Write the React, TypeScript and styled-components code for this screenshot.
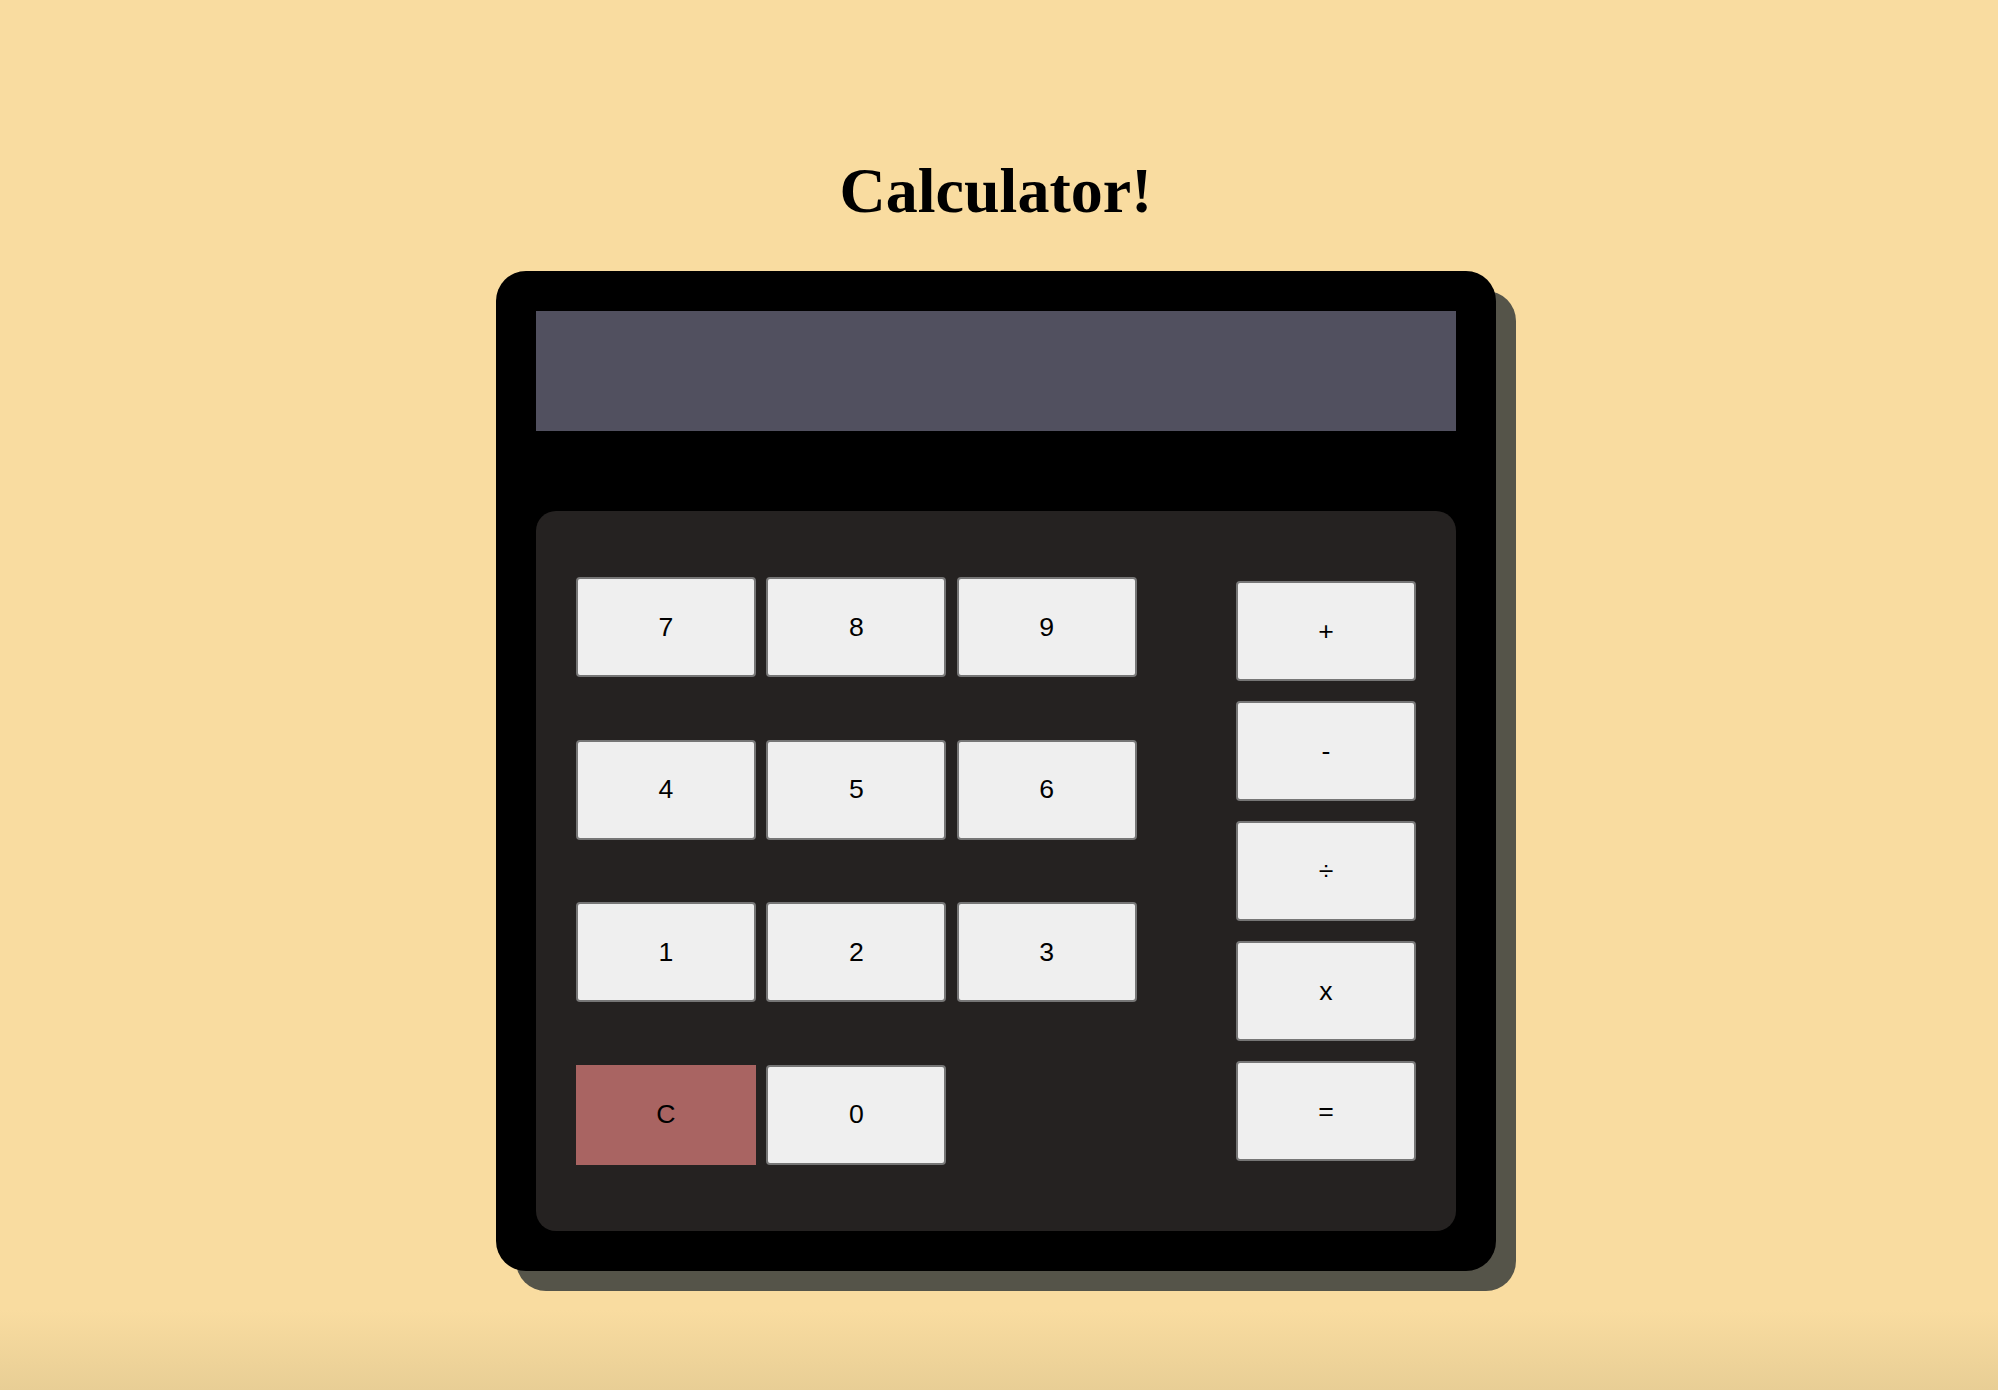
import styled, { createGlobalStyle } from "styled-components";

const Sand = "#f9dca0";
const Ink = "#000000";

const GlobalStyle = createGlobalStyle`
    html, body {
        margin: 0;
        padding: 0;
        background: ${Sand};
    }
    body {
        font-family: "Liberation Serif", "Times New Roman", serif;
    }
`;

const digitRows = [
    ["7", "8", "9"],
    ["4", "5", "6"],
    ["1", "2", "3"],
];

const operators = ["+", "-", "÷", "x", "="];

interface IKeyProps {
    readonly label: string;
    readonly clear?: boolean;
}

const Key = ({ label, clear }: IKeyProps): JSX.Element => (
    <KeyStyled type="button" $clear={clear}>
        {label}
    </KeyStyled>
);

export default function App(): JSX.Element {
    return (
        <PageStyled>
            <GlobalStyle />
            <TitleStyled>Calculator!</TitleStyled>
            <BodyStyled>
                <ScreenStyled />
                <KeypadStyled>
                    <DigitsStyled>
                        {digitRows.map((row) =>
                            row.map((digit) => <Key key={digit} label={digit} />)
                        )}
                        <Key label="C" clear />
                        <Key label="0" />
                    </DigitsStyled>
                    <OperatorsStyled>
                        {operators.map((op) => (
                            <Key key={op} label={op} />
                        ))}
                    </OperatorsStyled>
                </KeypadStyled>
            </BodyStyled>
        </PageStyled>
    );
}

// [== STYLES ==]
const PageStyled = styled.div`
    box-sizing: border-box;
    min-height: 100vh;
    padding: 154px 6px 40px 0;
    display: flex;
    flex-direction: column;
    align-items: center;
    background: linear-gradient(
        180deg,
        ${Sand} 0,
        ${Sand} calc(100% - 80px),
        #e8ce95 100%
    );
`;

const TitleStyled = styled.h1`
    margin: 0 0 43px;
    font-family: "Liberation Serif", "Times New Roman", serif;
    font-weight: 700;
    font-size: 64px;
    line-height: 74px;
    color: ${Ink};
    text-align: center;
`;

const BodyStyled = styled.div`
    box-sizing: border-box;
    width: 1000px;
    height: 1000px;
    padding: 40px;
    display: flex;
    flex-direction: column;
    gap: 80px;
    background: #000;
    border-radius: 30px;
    box-shadow: 20px 20px 0 #555449;
`;

const ScreenStyled = styled.div`
    height: 120px;
    background: #51505f;
`;

const KeypadStyled = styled.div`
    flex: 1;
    display: flex;
    align-items: center;
    justify-content: space-between;
    padding: 0 40px;
    background: #252221;
    border-radius: 20px;
`;

const DigitsStyled = styled.div`
    display: grid;
    grid-template-columns: repeat(3, 180px);
    grid-auto-rows: 100px;
    column-gap: 10.3px;
    row-gap: 62.5px;
`;

const OperatorsStyled = styled.div`
    display: flex;
    flex-direction: column;
    gap: 20px;
`;

const KeyStyled = styled.button<{ $clear?: boolean }>`
    box-sizing: border-box;
    width: 180px;
    height: 100px;
    margin: 0;
    padding: 0;
    font-family: "Liberation Sans", Arial, sans-serif;
    font-size: 26.67px;
    color: ${Ink};
    background: ${({ $clear }) => ($clear ? "#a96462" : "#efefef")};
    border: ${({ $clear }) => ($clear ? "none" : "2px solid #767676")};
    border-radius: ${({ $clear }) => ($clear ? "0" : "4px")};
    cursor: pointer;
`;
